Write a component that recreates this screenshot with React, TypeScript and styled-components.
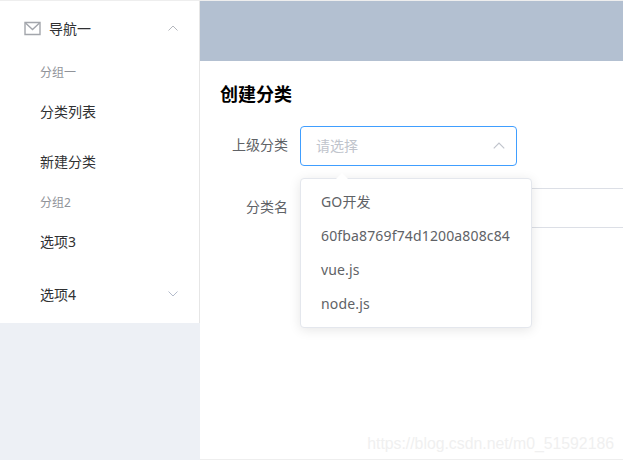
import React from 'react';
import styled, { createGlobalStyle } from 'styled-components';

const GlobalStyle = createGlobalStyle`
  html, body {
    margin: 0;
    padding: 0;
    background: #fff;
  }
  * {
    box-sizing: border-box;
  }
`;

const Layout = styled.div`
  position: relative;
  display: flex;
  width: 623px;
  height: 460px;
  overflow: hidden;
  border-top: 1px solid #eeeeee;
  font-family: 'Noto Sans', 'Noto Sans CJK SC', sans-serif;
  font-size: 14px;
  color: #303133;
`;

const Aside = styled.aside`
  width: 200px;
  flex-shrink: 0;
  background: #edf0f5;
`;

const Menu = styled.nav`
  background: #fff;
  border-right: 1px solid #e6e6e6;
`;

const SubmenuTitle = styled.div<{ $indent: number }>`
  display: flex;
  align-items: center;
  height: 56px;
  padding: 0 20px 2px ${({ $indent }) => $indent}px;
`;

const MailIcon = styled.svg`
  width: 17px;
  height: 15px;
  margin-right: 8px;
  color: #a3a6ac;
`;

const Chevron = styled.svg<{ $size: number; $color: string }>`
  width: ${({ $size }) => $size}px;
  height: ${({ $size }) => Math.round($size * 0.6)}px;
  margin-left: auto;
  margin-right: 1px;
  color: ${({ $color }) => $color};
`;

const GroupTitle = styled.div`
  height: 30px;
  padding-left: 40px;
  font-size: 12px;
  line-height: 32px;
  color: #909399;
`;

const MenuItem = styled.div`
  height: 50px;
  padding-left: 40px;
  line-height: 50px;
`;

const Main = styled.main`
  position: relative;
  flex: 1;
  min-width: 0;
  border-bottom: 1px solid #eeeeee;
`;

const TopBar = styled.header`
  height: 60px;
  background: #b3c0d1;
`;

const Content = styled.section`
  padding: 20px 0 0 20px;
`;

const Title = styled.h2`
  margin: 0 0 19px;
  font-size: 18px;
  line-height: 26px;
  font-weight: 700;
  color: #000;
`;

const FormRow = styled.div`
  display: flex;
  margin-bottom: 22px;
`;

const Label = styled.label`
  width: 68px;
  margin-right: 12px;
  line-height: 38px;
  text-align: right;
  color: #606266;
`;

const Select = styled.div`
  display: flex;
  align-items: center;
  justify-content: space-between;
  width: 217px;
  height: 40px;
  padding: 0 10px 2px 15px;
  border: 1px solid #409eff;
  border-radius: 4px;
  color: #c0c4cc;
`;

const Input = styled.div`
  flex: 1;
  height: 40px;
  border: 1px solid #dcdfe6;
  border-right: none;
`;

const Dropdown = styled.div`
  position: absolute;
  left: 100px;
  top: 177px;
  width: 232px;
  padding: 6px 0;
  background: #fff;
  border: 1px solid #e4e7ed;
  border-radius: 4px;
  box-shadow: 0 2px 12px rgba(0, 0, 0, 0.1);

  &::before {
    content: '';
    position: absolute;
    left: 35px;
    top: -6px;
    width: 0;
    height: 0;
    border-left: 6px solid transparent;
    border-right: 6px solid transparent;
    border-bottom: 6px solid #fff;
  }
`;

const Option = styled.div`
  height: 34px;
  padding: 0 20px;
  line-height: 34px;
  letter-spacing: 0.15px;
  color: #606266;
  white-space: nowrap;
`;

const Watermark = styled.div`
  position: absolute;
  right: 9px;
  bottom: 6px;
  font-family: 'Liberation Sans', sans-serif;
  font-size: 15.8px;
  line-height: 20px;
  color: #f0f0f0;
`;

const options = ['GO开发', '60fba8769f74d1200a808c84', 'vue.js', 'node.js'];

const App = () => (
  <Layout>
    <GlobalStyle />
    <Aside>
      <Menu>
        <SubmenuTitle $indent={24}>
          <MailIcon viewBox="0 0 17 15" fill="none" stroke="currentColor" strokeWidth="1.4">
            <path d="M1 1.500h15v12H1z" />
            <path d="M1.500 2 8.500 8.500 15.500 2" />
          </MailIcon>
          导航一
          <Chevron $size={10} $color="#b4b7bd" viewBox="0 0 10 6" fill="none" stroke="currentColor">
            <path d="M.5 5.500 5 1l4.500 4.500" />
          </Chevron>
        </SubmenuTitle>
        <GroupTitle>分组一</GroupTitle>
        <MenuItem>分类列表</MenuItem>
        <MenuItem>新建分类</MenuItem>
        <GroupTitle>分组2</GroupTitle>
        <MenuItem>选项3</MenuItem>
        <SubmenuTitle $indent={40}>
          选项4
          <Chevron $size={10} $color="#b4bccc" viewBox="0 0 10 6" fill="none" stroke="currentColor">
            <path d="M.5.500 5 5l4.500-4.500" />
          </Chevron>
        </SubmenuTitle>
      </Menu>
    </Aside>
    <Main>
      <TopBar />
      <Content>
        <Title>创建分类</Title>
        <FormRow>
          <Label>上级分类</Label>
          <Select>
            请选择
            <Chevron $size={12} $color="#c0c4cc" viewBox="0 0 10 6" fill="none" stroke="currentColor">
              <path d="M.5 5.500 5 1l4.500 4.500" />
            </Chevron>
          </Select>
        </FormRow>
        <FormRow>
          <Label>分类名</Label>
          <Input />
        </FormRow>
      </Content>
      <Dropdown>
        {options.map(option => (
          <Option key={option}>{option}</Option>
        ))}
      </Dropdown>
    </Main>
    <Watermark>https://blog.csdn.net/m0_51592186</Watermark>
  </Layout>
);

export default App;
